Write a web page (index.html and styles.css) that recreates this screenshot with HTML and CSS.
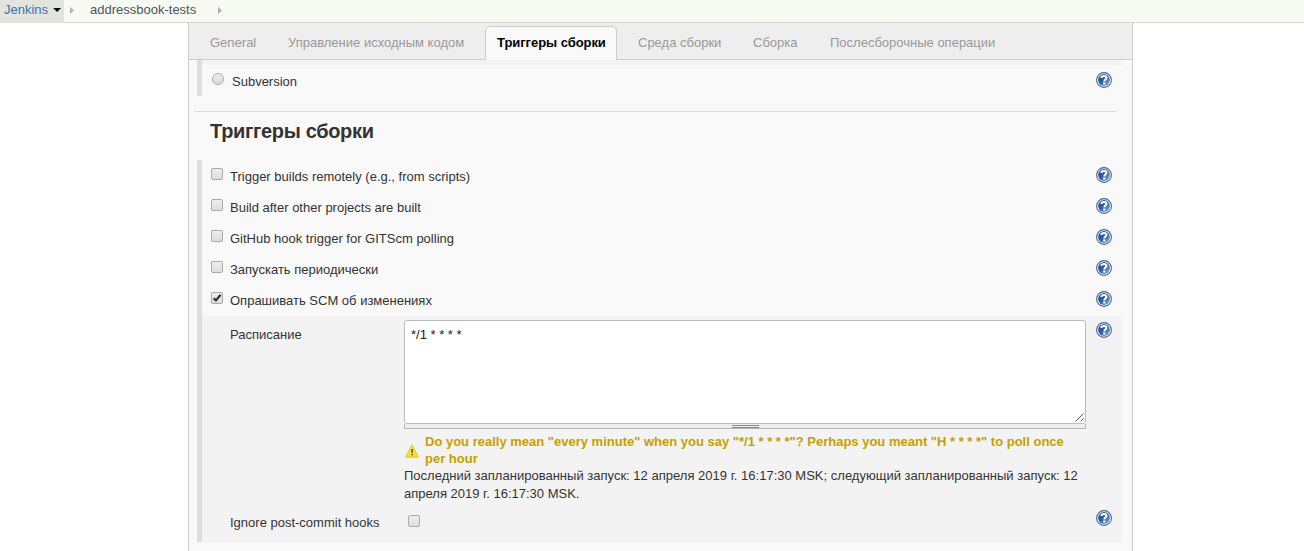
FILE: index.html
```html
<!DOCTYPE html>
<html lang="ru">
<head>
<meta charset="utf-8">
<title>addressbook-tests Config [Jenkins]</title>
<link rel="stylesheet" href="styles.css">
</head>
<body>
<svg class="defs" width="0" height="0">
  <defs>
    <linearGradient id="blue" x1="0" y1="0" x2="1" y2="1">
      <stop offset="0" stop-color="#1d4482"/><stop offset=".5" stop-color="#34619f"/><stop offset="1" stop-color="#8fb0d8"/>
    </linearGradient>
    <linearGradient id="yellow" x1="0" y1="0" x2="0" y2="1">
      <stop offset="0" stop-color="#f5e06c"/><stop offset="1" stop-color="#f5e21c"/>
    </linearGradient>
    <symbol id="help" viewBox="0 0 16 16">
      <circle cx="8" cy="8" r="7.400" fill="#fff" stroke="#3c649f" stroke-width="1.100"/>
      <circle cx="8" cy="8" r="5.900" fill="url(#blue)"/>
      <path d="M5.300 6C5.400 4.400 6.500 3.900 8 3.900s2.500.7 2.500 1.900C10.500 7.300 8.300 7.400 8.300 9.500" fill="none" stroke="#fff" stroke-width="2"/>
      <path d="M7.200 10.500h2.200v2H7.200z" fill="#fff"/>
    </symbol>
  </defs>
</svg>
<nav class="crumbs">
  <a class="crumb-home">Jenkins<i class="caret"></i></a>
  <i class="sep"></i>
  <a class="crumb-job">addressbook-tests</a>
  <i class="sep"></i>
</nav>
<main class="panel">
  <div class="tabs">
    <a class="tab t1"><span>General</span></a>
    <a class="tab t2"><span>Управление исходным кодом</span></a>
    <a class="tab active"><span>Триггеры сборки</span></a>
    <a class="tab t4"><span>Среда сборки</span></a>
    <a class="tab t5"><span>Сборка</span></a>
    <a class="tab t6"><span>Послесборочные операции</span></a>
  </div>
  <section class="group scm">
    <div class="strip"></div>
    <div class="row"><i class="radio"></i><span class="label">Subversion</span><svg class="help"><use href="#help"/></svg></div>
  </section>
  <hr class="rule">
  <h2 class="title">Триггеры сборки</h2>
  <section class="group">
    <div class="row"><i class="check"></i><span class="label">Trigger builds remotely (e.g., from scripts)</span><svg class="help"><use href="#help"/></svg></div>
    <div class="row"><i class="check"></i><span class="label">Build after other projects are built</span><svg class="help"><use href="#help"/></svg></div>
    <div class="row"><i class="check"></i><span class="label">GitHub hook trigger for GITScm polling</span><svg class="help"><use href="#help"/></svg></div>
    <div class="row"><i class="check"></i><span class="label">Запускать периодически</span><svg class="help"><use href="#help"/></svg></div>
    <div class="row"><i class="check"><svg class="tick" viewBox="0 0 12 12"><path d="M2.600 6.300 4.900 8.400 9.600 2.700" fill="none" stroke="#333" stroke-width="2.200"/></svg></i><span class="label">Опрашивать SCM об изменениях</span><svg class="help"><use href="#help"/></svg></div>
    <div class="nested">
      <div class="field">
        <span class="name">Расписание</span>
        <div class="control">
          <div class="area"><span>*/1 * * * *</span>
            <svg class="grip" viewBox="0 0 9 9"><path d="M.5 8.500l8-8M5.500 8.500l3-3" stroke="#555" fill="none"/></svg>
          </div>
          <div class="handle"><i class="lines"></i></div>
          <div class="warning">
            <svg class="warn" viewBox="0 0 14 14"><path d="M7 .8 13.400 13.200H.6z" fill="url(#yellow)" stroke="#dfc63a" stroke-width="1" stroke-linejoin="round"/><path d="M6.200 5h1.800l-.3 4H6.500zM6.300 9.800h1.500v1.500H6.300z" fill="#5a5426"/></svg>
            <div><span>Do you really mean "every minute" when you say "*/1 * * * *"? Perhaps you meant "H * * * *" to poll once</span><br><span>per hour</span></div>
          </div>
          <div class="info"><span class="first-line">Последний запланированный запуск: 12 апреля 2019 г. 16:17:30 MSK; следующий запланированный запуск: 12</span><br><span>апреля 2019 г. 16:17:30 MSK.</span></div>
        </div>
        <svg class="help"><use href="#help"/></svg>
      </div>
      <div class="field last">
        <span class="name">Ignore post-commit hooks</span>
        <div class="control"><i class="check"></i></div>
        <svg class="help"><use href="#help"/></svg>
      </div>
    </div>
  </section>
</main>
</body>
</html>
```
FILE: styles.css
```css
* { box-sizing: border-box; }
body { margin: 0; height: 551px; background: #fff; color: #333; font: 13px/18px "Liberation Sans", Arial, sans-serif; }
.defs { position: absolute; }
span, a { white-space: nowrap; }

.crumbs { display: flex; height: 23px; background: #f6faf2; border-bottom: 1px solid #d3d7cf; line-height: 19px; color: #4d545d; }
.crumb-home { display: flex; width: 64px; height: 23px; padding-left: 4px; background: #e2e5de; color: #3f70b0; }
.caret { width: 8px; height: 4px; margin: 8px 0 0 5px; background: #000; clip-path: polygon(0 0, 100% 0, 50% 100%); }
.sep { width: 4px; height: 7px; margin: 7px 16px 0 6px; background: #b0b3ad; clip-path: polygon(0 0, 100% 50%, 0 100%); }
.crumb-job { width: 122px; }

.panel { width: 945px; height: 528px; margin-left: 188px; border: solid #ccc; border-width: 0 1px; background: #f9f9f9; }
.tabs { display: flex; align-items: flex-end; height: 37px; background: #eee; border-bottom: 1px solid #ccc; color: #999; }
.tab { height: 33px; line-height: 33px; }
.t1 { margin-left: 21px; width: 78px; }
.t2 { width: 197px; }
.active { width: 132px; height: 34px; margin-bottom: -1px; padding-left: 11px; border: 1px solid #ccc; border-bottom: 0; border-radius: 5px 5px 0 0; background: #f9f9f9; color: #000; font-weight: bold; line-height: 32px; letter-spacing: -.05px; }
.t4 { margin-left: 21px; width: 115px; }
.t5 { width: 77px; }

.group { width: 925px; margin-left: 8px; border-left: 5px solid #ddd; }
.scm { height: 36px; }
.strip { height: 5px; background: #f3f3f3; }
.row { display: flex; height: 31px; padding: 7px 10px 0 9px; }
.row .label { padding-left: 7px; line-height: 20px; }
.scm .label { padding-left: 8px; }
.help { width: 16px; height: 16px; margin-left: auto; flex: none; }
.check { width: 12px; height: 12px; margin-top: 1px; flex: none; border: 1px solid #aaa; border-radius: 2px; background: linear-gradient(#eee, #ddd); }
.radio { width: 12px; height: 12px; margin: 1px 0 0 1px; flex: none; border: 1px solid #aaa; border-radius: 50%; background: linear-gradient(#eee, #d8d8d8); }
.tick { display: block; width: 12px; height: 12px; margin: -1px; }
.rule { width: 923px; height: 1px; margin: 15px 0 0 5px; border: 0; background: #ddd; }
.title { margin: 0 0 0 21px; height: 48px; padding-top: 7px; font-size: 20px; line-height: 24px; letter-spacing: -.33px; }

.nested { height: 227px; background: #f3f3f3; padding: 5px 10px 0 28px; }
.field { display: flex; height: 188px; }
.name { width: 174px; padding-top: 6px; flex: none; }
.control { width: 682px; }
.field .help { margin-top: 2px; }
.area { position: relative; height: 104px; padding: 5px 6px; border: 1px solid #bbb; border-radius: 3px; background: #fff; color: #222; }
.grip { position: absolute; right: 1px; bottom: 1px; width: 9px; height: 9px; }
.handle { height: 5px; padding-top: 1px; border: 1px solid #b5b8b0; border-top: 0; background: #eee; }
.lines { display: block; width: 27px; height: 3px; margin-left: 327px; border: solid #888c85; border-width: 1px 0; }
.warning { display: flex; padding-top: 4px; color: #c4a000; font-weight: bold; line-height: 17px; }
.warn { width: 14px; height: 14px; margin: 11px 6px 0 1px; flex: none; }
.first-line { letter-spacing: .01px; }
.last { height: 34px; }
.last .check { display: block; margin: 7px 0 0 4px; }
```
